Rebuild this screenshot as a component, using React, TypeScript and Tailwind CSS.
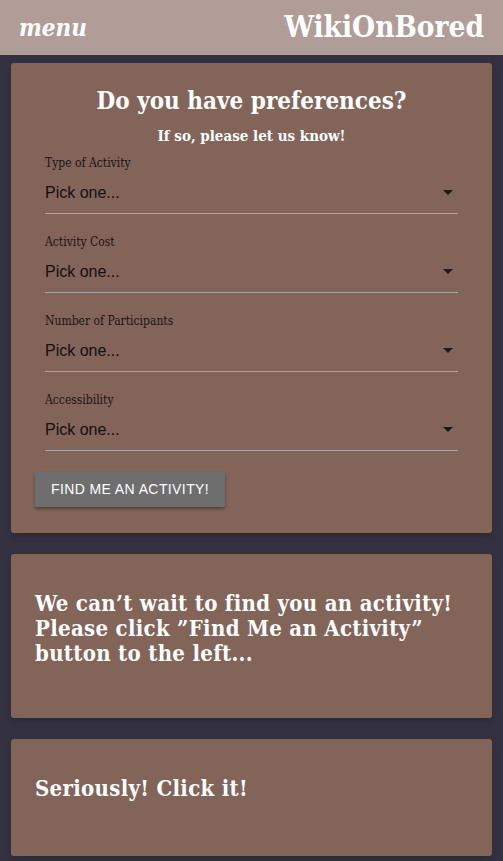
import React from "react";

const serif = "font-['DejaVu_Serif_Condensed','DejaVu_Serif',serif]";

const fields = ["Type of Activity", "Activity Cost", "Number of Participants", "Accessibility"];

function Field({ label }: { label: string }) {
  return (
    <div className="mx-[10px] mb-[21px]">
      <div className={`${serif} text-[12px] leading-[14px] text-[#1c1412]`}>{label}</div>
      <div className="flex h-[44px] items-center justify-between border-b border-[#a9a7a6] pt-[2px]">
        <span className="font-['Liberation_Sans',Arial,sans-serif] text-[16px] text-[#141010]">Pick one...</span>
        <svg width="10" height="5" viewBox="0 0 10 5" className="mr-[5px]">
          <path d="M0 0 L10 0 L5 5 Z" fill="#1f1a18" />
        </svg>
      </div>
    </div>
  );
}

export default function App() {
  return (
    <div className="min-h-[861px] bg-[#33313f]">
      <header className="flex h-[55px] items-center justify-between bg-[#b19d97] px-[19px] text-white">
        <span className={`${serif} text-[24px] font-bold italic`}>menu</span>
        <span className={`${serif} text-[29.5px] font-bold`}>WikiOnBored</span>
      </header>

      <main className="flex flex-col gap-[21px] px-[11px] pt-[8px]">
        <section className="rounded-[3px] bg-[#826459] px-[24px] pb-[26px] pt-[22px] shadow-md">
          <h1 className={`${serif} text-center text-[24px] font-bold leading-[32px] text-white`}>
            Do you have preferences?
          </h1>
          <p className={`${serif} mt-[9px] text-center text-[15px] font-bold leading-[20px] text-white`}>
            If so, please let us know!
          </p>
          <div className="mt-[10px]">
            {fields.map((f) => (
              <Field key={f} label={f} />
            ))}
          </div>
          <button className="h-[35px] rounded-[2px] bg-[#6e6e6e] px-[16px] font-['Liberation_Sans',Arial,sans-serif] text-[14px] tracking-[0.4px] text-white uppercase shadow-[0_2px_3px_rgba(0,0,0,0.35)]">
            Find Me an Activity!
          </button>
        </section>

        <section className="h-[164px] rounded-[3px] bg-[#826459] px-[24px] pt-[37px] shadow-md">
          <p className={`${serif} text-[22px] font-bold leading-[25px] tracking-[0.3px] text-white`}>
            We can’t wait to find you an activity! Please click ”Find Me an Activity” button to the left...
          </p>
        </section>

        <section className="h-[117px] rounded-[3px] bg-[#826459] px-[24px] pt-[37px] shadow-md">
          <p className={`${serif} text-[22px] font-bold leading-[25px] tracking-[0.3px] text-white`}>Seriously! Click it!</p>
        </section>
      </main>
    </div>
  );
}
